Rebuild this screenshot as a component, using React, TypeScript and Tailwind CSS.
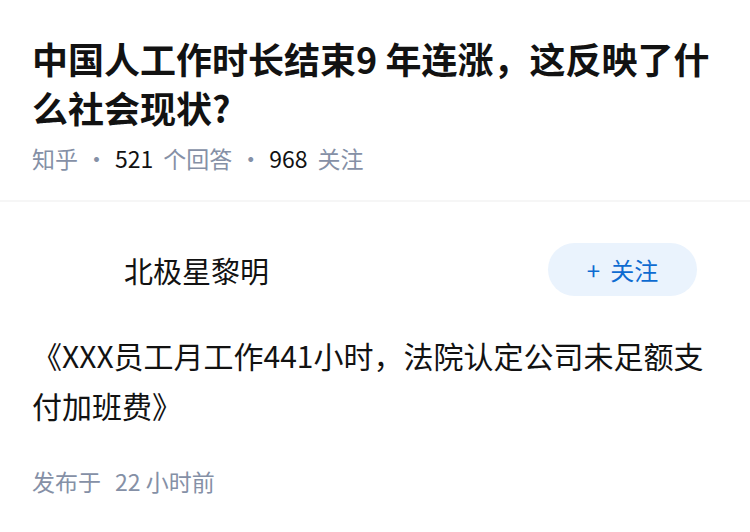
import React from 'react';

const font = { fontFamily: '"Noto Sans CJK SC", "Noto Sans", sans-serif' };

export default function App() {
  return (
    <div className="min-h-[532px] w-[750px] bg-white text-[#121212]" style={font}>
      {/* Question header */}
      <div className="px-8 pt-[34px] pb-[27px]">
        <h1 className="text-[36px] font-bold leading-[49px]">
          中国人工作时长结束9 年连涨，这反映了什么社会现状?
        </h1>
        <div className="mt-[11px] flex items-center text-[23px] leading-[30px] text-[#8590a6]">
          <span>知乎</span>
          <span className="mx-[7px]">·</span>
          <span className="text-[#121212]">521</span>
          <span className="ml-[10px]">个回答</span>
          <span className="mx-[7px]">·</span>
          <span className="text-[#121212]">968</span>
          <span className="ml-[10px]">关注</span>
        </div>
      </div>

      <div className="h-[2px] bg-[#f6f6f6]" />

      {/* Answer */}
      <div className="px-8 pt-[41px]">
        <div className="flex items-center justify-between pr-[21px]">
          <div className="flex items-center gap-4">
            <div className="h-[53px] w-[76px]" />
            <span className="text-[29px] leading-[40px]">北极星黎明</span>
          </div>
          <button
            type="button"
            className="flex h-[53px] w-[149px] items-center justify-center gap-[10px] rounded-full bg-[#eaf3fd] text-[24px] text-[#0d6bd1]"
          >
            <span>+</span>
            <span>关注</span>
          </button>
        </div>

        <p className="mt-[34px] text-[30px] leading-[50px]">
          《XXX员工月工作441小时，法院认定公司未足额支付加班费》
        </p>

        <div className="mt-[36px] flex text-[23px] leading-[30px] text-[#8590a6]">
          <span>发布于</span>
          <span className="ml-[14px]">22 小时前</span>
        </div>
      </div>
    </div>
  );
}
